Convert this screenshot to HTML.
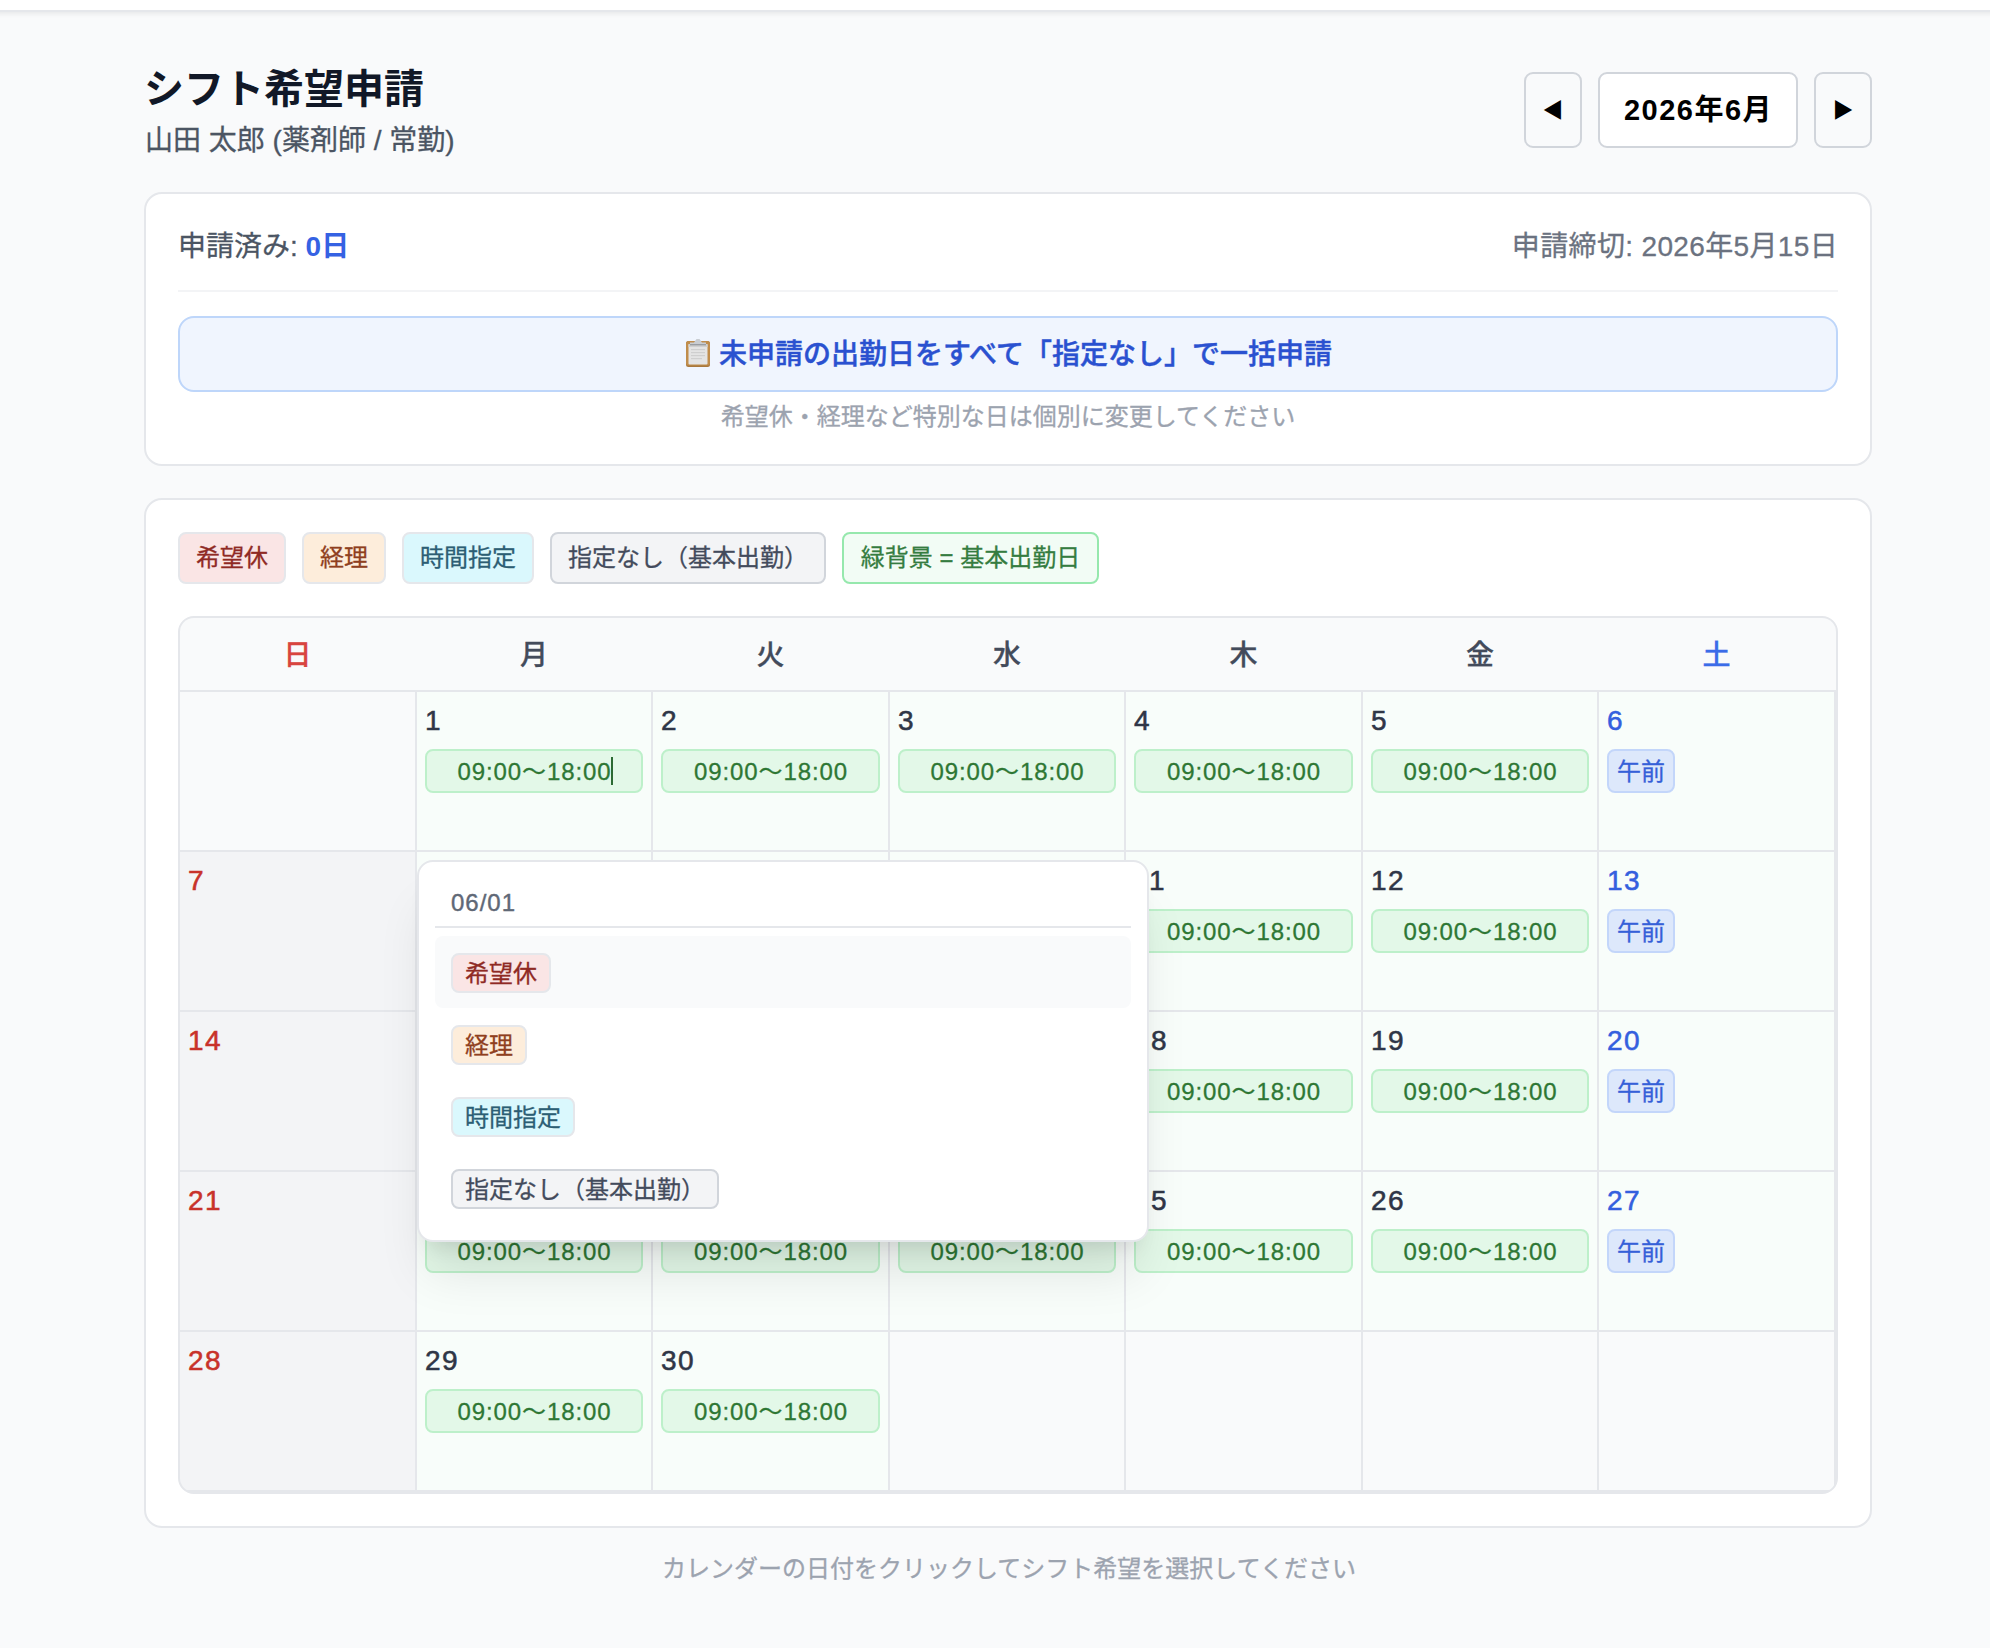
<!DOCTYPE html>
<html lang="ja">
<head>
<meta charset="utf-8">
<title>シフト希望申請</title>
<style>
*{box-sizing:border-box;margin:0;padding:0}
html,body{width:1990px;height:1648px;overflow:hidden;background:#f9fafb}
body{position:relative;-webkit-text-stroke:.3px;font-family:"Liberation Sans","Noto Sans CJK JP",sans-serif;color:#111827;-webkit-font-smoothing:antialiased}
.abs{position:absolute}
.topbar{left:-20px;top:0;width:2030px;height:12px;background:#fff;border-bottom:2px solid #e5e7eb;box-shadow:0 2px 5px rgba(0,0,0,.07)}
.title{left:144px;top:61px;-webkit-text-stroke:0;font-size:40px;line-height:56px;font-weight:700;color:#111827;white-space:nowrap}
.sub{left:145px;top:121px;font-size:28px;line-height:40px;color:#4b5563;white-space:nowrap}
.nbtn{top:72px;height:76px;background:#f9fafb;border:2px solid #d1d5db;border-radius:9px;display:flex;align-items:center;justify-content:center;font-size:21px;color:#000;-webkit-text-stroke:0;padding-bottom:4px}
.nbtn.month{background:#fff;font-weight:700;font-size:29px;letter-spacing:1.5px;padding-bottom:6px;padding-left:1px}
.card{left:144px;width:1728px;background:#fff;border:2px solid #e5e7eb;border-radius:18px}
.t28{font-size:28px;line-height:40px;white-space:nowrap}
.bulk{left:178px;top:316px;width:1660px;height:76px;background:#f0f5fe;border:2px solid #bed6fa;border-radius:16px}
.bulktxt{left:719px;top:335px;font-size:28px;line-height:40px;font-weight:500;color:#2a51d0;-webkit-text-stroke:.45px #2a51d0;white-space:nowrap}
.hint{left:144px;width:1728px;text-align:center;font-size:24px;line-height:32px;color:#9ca3af;white-space:nowrap}
.chip{position:absolute;padding-bottom:5px;display:flex;align-items:center;justify-content:center;font-size:24px;white-space:nowrap;border-radius:8px;border:2px solid transparent}
.c-red{background:#fae5e5;border-color:#e5e7eb;color:#8f2a24}
.c-org{background:#fdeddb;border-color:#e5e7eb;color:#8f3f1e}
.c-cyan{background:#daf8fd;border-color:#e5e7eb;color:#2c5e74}
.c-gray{background:#f3f4f6;border-color:#d1d5db;color:#434b5c}
.c-green{background:#f2fcf5;border-color:#96e8ad;color:#357c40}
.cal{left:178px;top:616px;width:1660px;height:878px;background:#e5e7eb;border:2px solid #e5e7eb;border-radius:16px;overflow:hidden}
.hd{position:absolute;top:0;height:72px;padding-bottom:3px;background:#f9fafb;display:flex;align-items:center;justify-content:center;font-size:28px;font-weight:500;color:#434b5b}
.cell{position:absolute;height:158px;background:#f9fafb}
.cell.sun{background:#f3f4f6}
.cell.work{background:#f8fdfa}
.num{position:absolute;left:8px;top:9px;letter-spacing:1.5px;font-size:28px;line-height:40px;font-weight:500;color:#2f3647;white-space:nowrap;-webkit-text-stroke:.55px}
.sun .num{color:#c8322a}
.sat .num{color:#3460de}
.tm{position:absolute;left:8px;top:57px;height:44px;right:8px;background:#e3f8e8;border:2px solid #bdf0ca;border-radius:8px;color:#2e7734;font-size:24px;letter-spacing:.9px;padding-bottom:4px;padding-left:1px;display:flex;align-items:center;justify-content:center;white-space:nowrap}
.am{position:absolute;left:8px;top:57px;height:44px;width:68px;background:#dde8fb;border:2px solid #c3d6fa;border-radius:8px;color:#3560d8;font-size:24px;padding-bottom:4px;display:flex;align-items:center;justify-content:center;white-space:nowrap}
.pop{left:417px;top:860px;width:732px;height:382px;background:#fff;border:2px solid #e5e7eb;border-radius:16px;box-shadow:0 40px 50px -10px rgba(0,0,0,.1),0 16px 20px -12px rgba(0,0,0,.1)}
.pdate{position:absolute;left:32px;top:25px;letter-spacing:1px;font-size:24px;line-height:32px;font-weight:500;color:#606876;-webkit-text-stroke:.4px #606876;white-space:nowrap}
.pline{position:absolute;left:16px;right:16px;top:64px;height:2px;background:#e5e7eb}
.pitem{position:absolute;left:16px;right:16px;height:72px;border-radius:8px}
.pchip{position:absolute;left:16px;top:17px;height:40px;padding:0 12px 4px;display:flex;align-items:center;font-size:24px;white-space:nowrap;border-radius:8px;border:2px solid #e5e7eb}
.pchip.c-gray{border-color:#d1d5db}
</style>
</head>
<body>
<div class="abs topbar"></div>
<div class="abs title">シフト希望申請</div>
<div class="abs sub">山田 太郎 (薬剤師 / 常勤)</div>

<div class="abs nbtn" style="left:1524px;width:58px">◀</div>
<div class="abs nbtn month" style="left:1598px;width:200px">2026年6月</div>
<div class="abs nbtn" style="left:1814px;width:58px">▶</div>

<div class="abs card" style="top:192px;height:274px"></div>
<div class="abs t28" style="left:178px;top:227px;color:#4b5563">申請済み: <b style="color:#3562e3;-webkit-text-stroke:0">0日</b></div>
<div class="abs t28" style="right:152px;top:227px;color:#6b7280;letter-spacing:.35px">申請締切: 2026年5月15日</div>
<div class="abs" style="left:178px;top:290px;width:1660px;height:2px;background:#f3f4f6"></div>
<div class="abs bulk"></div>
<svg class="abs" style="left:685px;top:338px" width="26" height="30" viewBox="0 0 26 30">
<rect x="1" y="3" width="24" height="26" rx="2.5" fill="#a9783d"/>
<rect x="1" y="3" width="24" height="24.5" rx="2.5" fill="#c08d4c"/>
<rect x="3.5" y="6" width="19" height="20.5" rx="1" fill="#e4e4e4"/>
<rect x="3.5" y="6" width="19" height="3" fill="#d0d0d0"/>
<path d="M9 4.5 L11.5 1 L14.5 1 L17 4.5 L21 4.5 L21 7 L5 7 L5 4.5 Z" fill="#c9cdd2"/>
<rect x="5" y="6" width="16" height="1.4" fill="#9a9da2"/>
<g fill="#cfcfcf"><rect x="6" y="11" width="14" height="1.2"/><rect x="6" y="14" width="14" height="1.2"/><rect x="6" y="17" width="14" height="1.2"/><rect x="6" y="20" width="11" height="1.2"/></g>
</svg>
<div class="abs bulktxt">未申請の出勤日をすべて「指定なし」で一括申請</div>
<div class="abs hint" style="top:401px">希望休・経理など特別な日は個別に変更してください</div>

<div class="abs card" style="top:498px;height:1030px"></div>
<div class="chip c-red" style="left:178px;top:532px;width:108px;height:52px">希望休</div>
<div class="chip c-org" style="left:302px;top:532px;width:84px;height:52px">経理</div>
<div class="chip c-cyan" style="left:402px;top:532px;width:132px;height:52px">時間指定</div>
<div class="chip c-gray" style="left:550px;top:532px;width:276px;height:52px">指定なし（基本出勤）</div>
<div class="chip c-green" style="left:842px;top:532px;width:257px;height:52px">緑背景 = 基本出勤日</div>

<div class="abs cal" id="cal">
<div class="hd" style="left:0;width:1656px"></div>
<div class="hd" style="left:0px;width:235px;background:none;color:#d8443f">日</div>
<div class="hd" style="left:237px;width:234px;background:none;color:#434b5b">月</div>
<div class="hd" style="left:473px;width:235px;background:none;color:#434b5b">火</div>
<div class="hd" style="left:710px;width:234px;background:none;color:#434b5b">水</div>
<div class="hd" style="left:946px;width:235px;background:none;color:#434b5b">木</div>
<div class="hd" style="left:1183px;width:234px;background:none;color:#434b5b">金</div>
<div class="hd" style="left:1419px;width:235px;background:none;color:#3b6ce8">土</div>
<div class="cell" style="left:0px;top:74px;width:235px"></div>
<div class="cell work" style="left:237px;top:74px;width:234px"><div class="num">1</div><div class="tm">09:00〜18:00</div></div>
<div class="cell work" style="left:473px;top:74px;width:235px"><div class="num">2</div><div class="tm">09:00〜18:00</div></div>
<div class="cell work" style="left:710px;top:74px;width:234px"><div class="num">3</div><div class="tm">09:00〜18:00</div></div>
<div class="cell work" style="left:946px;top:74px;width:235px"><div class="num">4</div><div class="tm">09:00〜18:00</div></div>
<div class="cell work" style="left:1183px;top:74px;width:234px"><div class="num">5</div><div class="tm">09:00〜18:00</div></div>
<div class="cell work sat" style="left:1419px;top:74px;width:235px"><div class="num">6</div><div class="am">午前</div></div>
<div class="cell sun" style="left:0px;top:234px;width:235px"><div class="num">7</div></div>
<div class="cell work" style="left:237px;top:234px;width:234px"><div class="num">8</div><div class="tm">09:00〜18:00</div></div>
<div class="cell work" style="left:473px;top:234px;width:235px"><div class="num">9</div><div class="tm">09:00〜18:00</div></div>
<div class="cell work" style="left:710px;top:234px;width:234px"><div class="num">10</div><div class="tm">09:00〜18:00</div></div>
<div class="cell work" style="left:946px;top:234px;width:235px"><div class="num">11</div><div class="tm">09:00〜18:00</div></div>
<div class="cell work" style="left:1183px;top:234px;width:234px"><div class="num">12</div><div class="tm">09:00〜18:00</div></div>
<div class="cell work sat" style="left:1419px;top:234px;width:235px"><div class="num">13</div><div class="am">午前</div></div>
<div class="cell sun" style="left:0px;top:394px;width:235px"><div class="num">14</div></div>
<div class="cell work" style="left:237px;top:394px;width:234px"><div class="num">15</div><div class="tm">09:00〜18:00</div></div>
<div class="cell work" style="left:473px;top:394px;width:235px"><div class="num">16</div><div class="tm">09:00〜18:00</div></div>
<div class="cell work" style="left:710px;top:394px;width:234px"><div class="num">17</div><div class="tm">09:00〜18:00</div></div>
<div class="cell work" style="left:946px;top:394px;width:235px"><div class="num">18</div><div class="tm">09:00〜18:00</div></div>
<div class="cell work" style="left:1183px;top:394px;width:234px"><div class="num">19</div><div class="tm">09:00〜18:00</div></div>
<div class="cell work sat" style="left:1419px;top:394px;width:235px"><div class="num">20</div><div class="am">午前</div></div>
<div class="cell sun" style="left:0px;top:554px;width:235px"><div class="num">21</div></div>
<div class="cell work" style="left:237px;top:554px;width:234px"><div class="num">22</div><div class="tm">09:00〜18:00</div></div>
<div class="cell work" style="left:473px;top:554px;width:235px"><div class="num">23</div><div class="tm">09:00〜18:00</div></div>
<div class="cell work" style="left:710px;top:554px;width:234px"><div class="num">24</div><div class="tm">09:00〜18:00</div></div>
<div class="cell work" style="left:946px;top:554px;width:235px"><div class="num">25</div><div class="tm">09:00〜18:00</div></div>
<div class="cell work" style="left:1183px;top:554px;width:234px"><div class="num">26</div><div class="tm">09:00〜18:00</div></div>
<div class="cell work sat" style="left:1419px;top:554px;width:235px"><div class="num">27</div><div class="am">午前</div></div>
<div class="cell sun" style="left:0px;top:714px;width:235px"><div class="num">28</div></div>
<div class="cell work" style="left:237px;top:714px;width:234px"><div class="num">29</div><div class="tm">09:00〜18:00</div></div>
<div class="cell work" style="left:473px;top:714px;width:235px"><div class="num">30</div><div class="tm">09:00〜18:00</div></div>
<div class="cell" style="left:710px;top:714px;width:234px"></div>
<div class="cell" style="left:946px;top:714px;width:235px"></div>
<div class="cell" style="left:1183px;top:714px;width:234px"></div>
<div class="cell" style="left:1419px;top:714px;width:235px"></div>
</div><!--/cal-->

<div class="abs" style="left:611px;top:757px;width:2px;height:28px;background:#2c6a33"></div>
<div class="abs pop" id="pop">
<div class="pdate">06/01</div>
<div class="pline"></div>
<div class="pitem" style="top:74px;background:#f9fafb"><span class="pchip c-red">希望休</span></div>
<div class="pitem" style="top:146px"><span class="pchip c-org">経理</span></div>
<div class="pitem" style="top:218px"><span class="pchip c-cyan">時間指定</span></div>
<div class="pitem" style="top:290px"><span class="pchip c-gray">指定なし（基本出勤）</span></div>
</div>

<div class="abs hint" style="top:1553px;left:145px">カレンダーの日付をクリックしてシフト希望を選択してください</div>
</body>
</html>
